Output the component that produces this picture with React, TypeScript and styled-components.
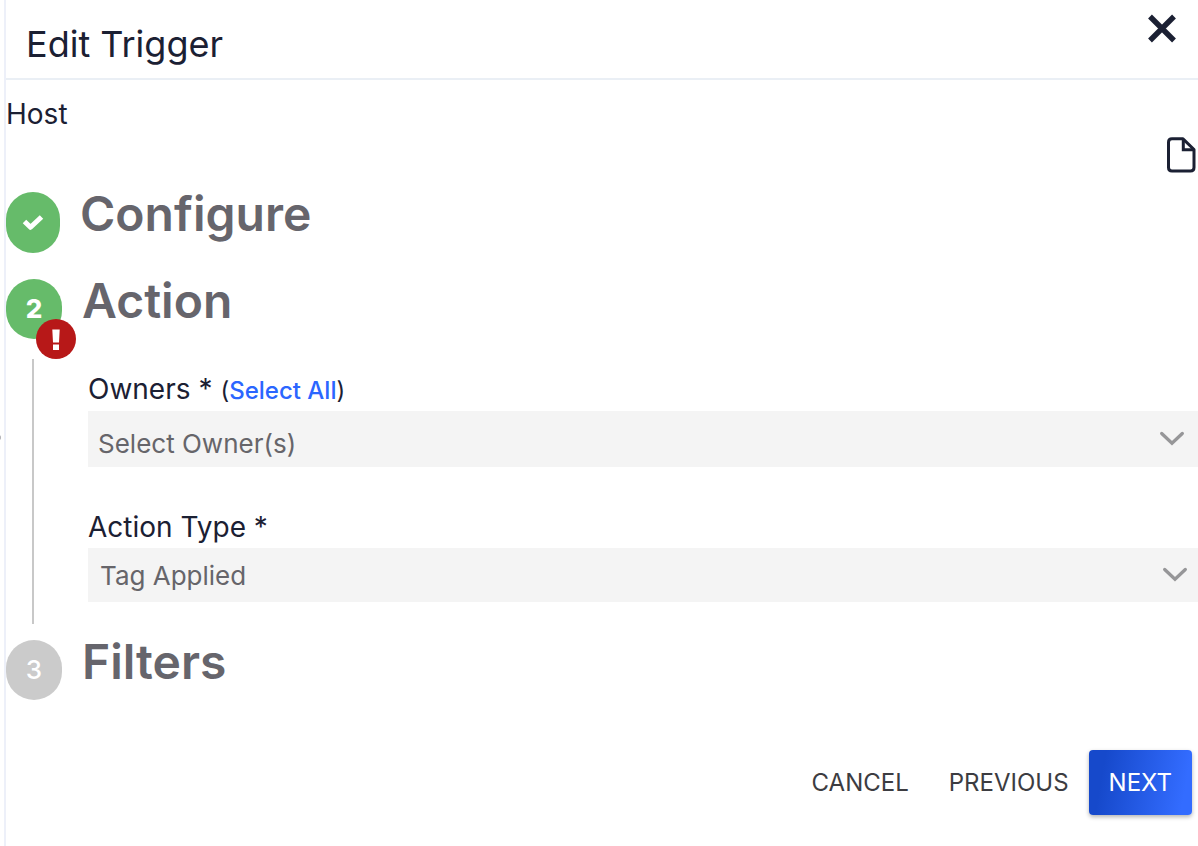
import React from "react";
import styled, { createGlobalStyle } from "styled-components";

const GlobalStyle = createGlobalStyle`
  *, *::before, *::after { box-sizing: border-box; }
  body {
    margin: 0;
    background: #fff;
    color: #1b2033;
    font-family: Inter, "Liberation Sans", sans-serif;
    overflow-x: hidden;
  }
  button, select { font-family: inherit; }
`;

const Page = styled.div`
  position: relative;
  min-height: 100vh;
  display: flex;
  padding-left: 4px;
`;

const EdgeDot = styled.span`
  position: absolute;
  left: -3px;
  top: 435px;
  width: 4px;
  height: 5px;
  border-radius: 2px;
  background: #b5b5b9;
`;

const Panel = styled.section`
  flex: 1;
  min-width: 0;
  border-left: 2px solid #edf0f9;
`;

const Header = styled.header`
  display: flex;
  justify-content: space-between;
  align-items: flex-start;
  height: 80px;
  padding: 12px 20px 0;
  border-bottom: 2px solid #eaeff5;
`;

const Title = styled.h1`
  margin: 0;
  padding-top: 8px;
  font-size: 36px;
  line-height: 48px;
  font-weight: 400;
`;

const IconButton = styled.button`
  display: flex;
  padding: 0;
  border: 0;
  background: none;
  color: inherit;
  cursor: pointer;
`;

const HostLabel = styled.div`
  padding-top: 16px;
  font-size: 28px;
  line-height: 36px;
`;

const Tools = styled.div`
  display: flex;
  justify-content: flex-end;
  height: 60px;
  padding: 4px 0;
`;

const StepHead = styled.div`
  display: flex;
  align-items: flex-start;
  gap: 20px;
`;

const StepMark = styled.span<{ $done?: boolean; $narrow?: boolean }>`
  position: relative;
  display: flex;
  flex: none;
  align-items: center;
  justify-content: center;
  width: ${(p) => (p.$narrow ? 54 : 56)}px;
  height: ${(p) => (p.$narrow ? 61 : 60)}px;
  border-radius: 28px;
  background: ${(p) => (p.$done ? "#66bb6a" : "#cbcbcb")};
  color: #fff;
  font-size: 26px;
  line-height: 32px;
  font-weight: ${(p) => (p.$done ? 800 : 500)};
`;

const ErrorBadge = styled.span`
  position: absolute;
  left: 30px;
  top: 40px;
  display: flex;
  align-items: center;
  justify-content: center;
  width: 40px;
  height: 40px;
  border-radius: 50%;
  background: #b71818;
`;

const StepTitle = styled.h2`
  margin: 0;
  color: #66656c;
  font-size: 48px;
  line-height: 44px;
  font-weight: 600;
`;

const StepBody = styled.div`
  margin: 20px 0 16px 26px;
  padding-left: 54px;
  border-left: 2px solid #c8c8c8;
  height: 265px;
`;

const StepGap = styled.div`
  height: 26px;
`;

const Label = styled.label`
  font-size: 28px;
  line-height: 36px;
`;

const LabelRow = styled.div<{ $first?: boolean }>`
  display: flex;
  align-items: baseline;
  gap: 8px;
  height: ${(p) => (p.$first ? 52 : 81)}px;
  padding-top: ${(p) => (p.$first ? 12 : 42)}px;
`;

const SelectAll = styled.span`
  font-size: 24px;
  line-height: 36px;
`;

const LinkButton = styled.button`
  padding: 0;
  border: 0;
  background: none;
  color: #2b66ff;
  font-size: 24px;
  font-weight: 500;
  cursor: pointer;
`;

const SelectBox = styled.div<{ $tall?: boolean }>`
  display: flex;
  align-items: center;
  height: ${(p) => (p.$tall ? 56 : 54)}px;
  padding-right: ${(p) => (p.$tall ? 13 : 10)}px;
  background: #f4f4f4;

  select {
    flex: 1;
    height: 100%;
    margin-right: -26px;
    padding: ${(p) => (p.$tall ? "10px 26px 0 10px" : "2px 26px 0 12px")};
    border: 0;
    appearance: none;
    background: transparent;
    color: #66656a;
    font-size: 26px;
    line-height: 36px;
  }
  svg { flex: none; pointer-events: none; }
`;

const Footer = styled.footer`
  display: flex;
  justify-content: flex-end;
  align-items: center;
  padding: 50px 6px 24px 0;
`;

const TextButton = styled.button`
  height: 65px;
  padding: 0 20px;
  border: 0;
  background: none;
  color: #3c3c41;
  font-size: 24px;
  cursor: pointer;
`;

const NextButton = styled(TextButton)`
  border-radius: 4px;
  background: linear-gradient(100deg, #1649cb 15%, #336cff 90%);
  box-shadow: 0 2px 4px rgba(0, 0, 0, 0.3);
  color: #fff;
`;

const Chevron = () => (
  <svg width="26" height="16" viewBox="0 0 26 16" fill="none" stroke="#969698" strokeWidth="3.3" strokeLinecap="round" strokeLinejoin="miter">
    <path d="M2.700 2.500 13 12.200 23.300 2.500" />
  </svg>
);

export default function App() {
  return (
    <Page>
      <GlobalStyle />
      <EdgeDot />
      <Panel>
        <Header>
          <Title>Edit Trigger</Title>
          <IconButton aria-label="Close">
            <svg width="32" height="32" viewBox="0 0 32 32" fill="none" stroke="#1b2033" strokeWidth="5.4" strokeLinejoin="round">
              <path d="M4 4.500 28 28.500M28 4.500 4 28.500" />
            </svg>
          </IconButton>
        </Header>
        <HostLabel>Host</HostLabel>
        <Tools>
          <IconButton aria-label="Document">
            <svg width="32" height="38" viewBox="0 0 32 38" fill="none" stroke="#1b2033" strokeWidth="3" strokeLinejoin="round">
              <path d="M6 2.800H17L28 13.500V31.500Q28 35 24.500 35H6Q2.500 35 2.500 31.500V6.300Q2.500 2.800 6 2.800Z" />
              <path d="M17.300 3V13.700H28" strokeLinejoin="miter" />
            </svg>
          </IconButton>
        </Tools>
        <StepHead>
          <StepMark $done $narrow>
            <svg width="22" height="18" viewBox="0 0 22 18" fill="none" stroke="#fff" strokeWidth="5" strokeLinejoin="round">
              <path d="M2.500 7.500 8.500 13.300 19.500 3" />
            </svg>
          </StepMark>
          <StepTitle>Configure</StepTitle>
        </StepHead>
        <StepGap />
        <StepHead>
          <StepMark $done>
            2
            <ErrorBadge>
              <svg width="8" height="22" viewBox="0 0 8 22" fill="#fff">
                <path d="M0.300 1.500H7.700L7 14.500H1ZM1 16.500H7V22H1Z" />
              </svg>
            </ErrorBadge>
          </StepMark>
          <StepTitle>Action</StepTitle>
        </StepHead>
        <StepBody>
          <LabelRow $first>
            <Label htmlFor="owners">Owners *</Label>
            <SelectAll>
              (<LinkButton>Select All</LinkButton>)
            </SelectAll>
          </LabelRow>
          <SelectBox $tall>
            <select id="owners">
              <option>Select Owner(s)</option>
            </select>
            <Chevron />
          </SelectBox>
          <LabelRow>
            <Label htmlFor="action-type">Action Type *</Label>
          </LabelRow>
          <SelectBox>
            <select id="action-type">
              <option>Tag Applied</option>
            </select>
            <Chevron />
          </SelectBox>
        </StepBody>
        <StepHead>
          <StepMark>3</StepMark>
          <StepTitle>Filters</StepTitle>
        </StepHead>
        <Footer>
          <TextButton>CANCEL</TextButton>
          <TextButton>PREVIOUS</TextButton>
          <NextButton>NEXT</NextButton>
        </Footer>
      </Panel>
    </Page>
  );
}
